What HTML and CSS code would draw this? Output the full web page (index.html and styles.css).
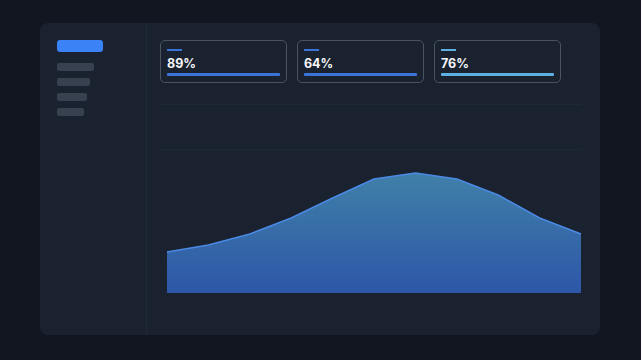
FILE: index.html
```html
<!DOCTYPE html>
<html lang="en">

<head>
    <meta charset="UTF-8">
    <meta name="viewport" content="width=device-width, initial-scale=1.0">
    <title>Dashboard</title>
    <link rel="stylesheet" href="styles.css">
</head>

<body>
    <div class="panel">
        <aside class="sidebar">
            <div class="nav-item active"></div>
            <div class="nav-item" style="width: 37px"></div>
            <div class="nav-item" style="width: 33px"></div>
            <div class="nav-item" style="width: 30px"></div>
            <div class="nav-item" style="width: 27px"></div>
        </aside>
        <main class="main">
            <div class="cards">
                <div class="card">
                    <div class="card-tick"></div>
                    <div class="card-value">89%</div>
                    <div class="card-bar"></div>
                </div>
                <div class="card">
                    <div class="card-tick"></div>
                    <div class="card-value">64%</div>
                    <div class="card-bar"></div>
                </div>
                <div class="card light">
                    <div class="card-tick"></div>
                    <div class="card-value">76%</div>
                    <div class="card-bar"></div>
                </div>
            </div>
            <svg class="chart" width="423" height="205" viewBox="0 0 423 205">
                <defs>
                    <linearGradient id="areaFill" x1="0" y1="0" x2="0" y2="1">
                        <stop offset="0" stop-color="#4080a8" />
                        <stop offset="1" stop-color="#2d56a8" />
                    </linearGradient>
                </defs>
                <line class="grid" x1="0" y1="9.5" x2="421" y2="9.5" />
                <line class="grid" x1="0" y1="54.5" x2="421" y2="54.5" />
                <path fill="url(#areaFill)"
                    d="M7 157 L48.4 150 L89.8 139 L131.2 123 L172.6 103 L214 84 L255.4 78 L296.8 84 L338.2 100 L379.6 123 L421 139 L421 198 L7 198 Z" />
                <polyline class="line"
                    points="7,157 48.4,150 89.8,139 131.2,123 172.6,103 214,84 255.4,78 296.8,84 338.2,100 379.6,123 421,139" />
            </svg>
        </main>
    </div>
</body>

</html>
```

FILE: styles.css
```css
* {
    margin: 0;
    padding: 0;
    box-sizing: border-box;
    font-family: Inter, 'Liberation Sans', sans-serif;
}

body {
    background-color: #111620;
    padding: 23px 40px;
    color: #f3f4f6;
}

.panel {
    width: 560px;
    height: 312px;
    background: #1a2230;
    border-radius: 8px;
    display: flex;
    overflow: hidden;
}

.sidebar {
    width: 107px;
    padding: 17px;
    border-right: 1px solid #202938;
    display: flex;
    flex-direction: column;
    gap: 7px;
}

.nav-item {
    height: 8px;
    border-radius: 2px;
    background: #384150;
}

.nav-item.active {
    width: 46px;
    height: 12px;
    border-radius: 3px;
    background: #3b82f6;
    margin-bottom: 4px;
}

.main {
    flex: 1;
    padding: 17px 0 0 13px;
}

.cards {
    display: flex;
    gap: 10px;
}

.card {
    width: 127px;
    height: 43px;
    border: 1px solid #4b5361;
    border-radius: 5px;
    padding: 8px 6px 6px;
}

.card-tick {
    width: 15px;
    height: 2px;
    background: #3b74d9;
}

.card-value {
    margin-top: 6px;
    font-size: 12.5px;
    line-height: 14px;
    font-weight: 700;
    color: #f5f6f8;
}

.card-bar {
    margin-top: 2px;
    height: 3px;
    border-radius: 1px;
    background: #3b74d9;
}

.card.light .card-tick,
.card.light .card-bar {
    background: #5fb0e2;
}

.chart {
    display: block;
    margin-top: 12px;
}

.grid {
    stroke: #1f2836;
    stroke-width: 1;
}

.line {
    fill: none;
    stroke: #4a8ae6;
    stroke-width: 1.5;
    stroke-linejoin: round;
}
```
